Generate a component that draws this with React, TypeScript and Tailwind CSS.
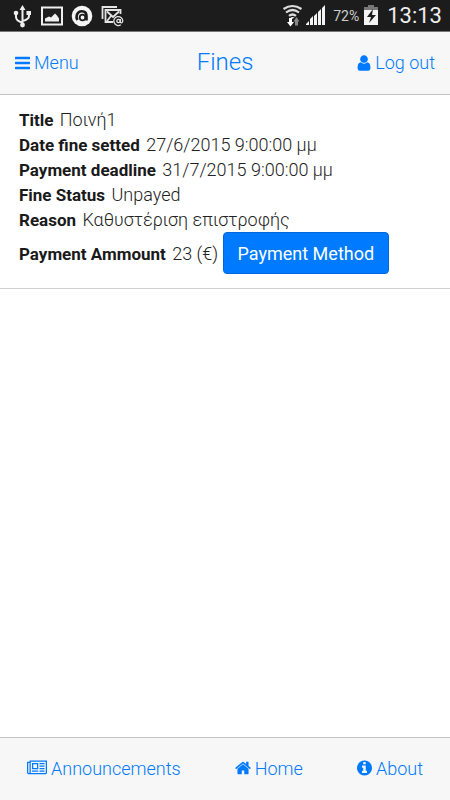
import type { ReactNode } from 'react';

const fines = [
  {
    id: 1,
    title: 'Ποινή1',
    date: '27/6/2015 9:00:00 μμ',
    deadline: '31/7/2015 9:00:00 μμ',
    status: 'Unpayed',
    reason: 'Καθυστέριση επιστροφής',
    amount: '23 (€)',
  },
];

function BarsIcon() {
  return (
    <svg className="h-[18px] w-[15px]" viewBox="128 0 1536 1792" fill="currentColor" aria-hidden="true">
      <path d="M1664 1344v128q0 26-19 45t-45 19h-1408q-26 0-45-19t-19-45v-128q0-26 19-45t45-19h1408q26 0 45 19t19 45zm0-512v128q0 26-19 45t-45 19h-1408q-26 0-45-19t-19-45v-128q0-26 19-45t45-19h1408q26 0 45 19t19 45zm0-512v128q0 26-19 45t-45 19h-1408q-26 0-45-19t-19-45v-128q0-26 19-45t45-19h1408q26 0 45 19t19 45z" />
    </svg>
  );
}

function UserIcon() {
  return (
    <svg className="h-[18px] w-[14px]" viewBox="256 0 1280 1792" fill="currentColor" aria-hidden="true">
      <path d="M1536 1399q0 109-62.5 187t-150.5 78h-854q-88 0-150.5-78t-62.5-187q0-85 8.5-160.5t31.5-152 58.5-131 94-89 134.5-34.5q131 128 313 128t313-128q76 0 134.5 34.5t94 89 58.5 131 31.5 152 8.5 160.5zm-256-887q0 159-112.5 271.5t-271.5 112.5-271.5-112.5-112.5-271.5 112.5-271.5 271.5-112.5 271.5 112.5 112.5 271.5z" />
    </svg>
  );
}

function NewsIcon() {
  return (
    <svg className="h-[18px] w-[20px]" viewBox="0 0 2048 1792" fill="currentColor" aria-hidden="true">
      <path d="M1024 512h-384v384h384v-384zm128 640v128h-640v-128h640zm0-768v640h-640v-640h640zm640 768v128h-512v-128h512zm0-256v128h-512v-128h512zm0-256v128h-512v-128h512zm0-256v128h-512v-128h512zm-1536 960v-960h-128v960q0 26 19 45t45 19 45-19 19-45zm1664 0v-1088h-1536v1088q0 33-11 64h1483q26 0 45-19t19-45zm128-1216v1216q0 80-56 136t-136 56h-1664q-80 0-136-56t-56-136v-1088h256v-128h1792z" />
    </svg>
  );
}

function HomeIcon() {
  return (
    <svg className="h-[18px] w-[16px]" viewBox="64 0 1664 1792" fill="currentColor" aria-hidden="true">
      <path d="M1472 992v480q0 26-19 45t-45 19h-384v-384h-256v384h-384q-26 0-45-19t-19-45v-480q0-1 .5-3t.5-3l575-474 575 474q1 2 1 6zm223-69l-62 74q-8 9-21 11h-3q-13 0-21-7l-692-577-692 577q-12 8-24 7-13-2-21-11l-62-74q-8-10-7-23.5t11-21.5l719-599q32-26 76-26t76 26l244 204v-195q0-14 9-23t23-9h192q14 0 23 9t9 23v408l219 182q10 8 11 21.5t-7 23.5z" />
    </svg>
  );
}

function InfoIcon() {
  return (
    <svg className="h-[18px] w-[15px]" viewBox="128 0 1536 1792" fill="currentColor" aria-hidden="true">
      <path d="M1152 1376v-160q0-14-9-23t-23-9h-96v-512q0-14-9-23t-23-9h-320q-14 0-23 9t-9 23v160q0 14 9 23t23 9h96v320h-96q-14 0-23 9t-9 23v160q0 14 9 23t23 9h448q14 0 23-9t9-23zm-128-896v-160q0-14-9-23t-23-9h-192q-14 0-23 9t-9 23v160q0 14 9 23t23 9h192q14 0 23-9t9-23zm640 416q0 209-103 385.5t-279.5 279.5-385.5 103-385.5-103-279.5-279.5-103-385.5 103-385.5 279.5-279.5 385.5-103 385.5 103 279.5 279.5 103 385.5z" />
    </svg>
  );
}

function StatusBar() {
  return (
    <div className="flex h-8 items-center justify-between border-b border-[#777] bg-[#1c1c1c] pr-2 pl-3 font-normal text-white">
      <div className="flex items-center gap-[7px]">
        {/* usb */}
        <svg className="h-6 w-5" viewBox="0 0 20 24" fill="none" stroke="#eee" strokeWidth="2" aria-hidden="true">
          <path d="M10.500 5v16M10.500 18.500c-4-1-6.500-3-6.500-5.500V9M10.500 17c4-1 6.500-2 6.500-5V9" />
          <circle cx="10.500" cy="21" r="2.400" fill="#eee" stroke="none" />
          <circle cx="4" cy="9" r="2.300" fill="#eee" stroke="none" />
          <path d="M14.500 7h4.500v4h-4.500zM10.500 1l3 5h-6z" fill="#eee" stroke="none" />
        </svg>
        {/* picture */}
        <svg className="h-6 w-6" viewBox="0 0 24 24" aria-hidden="true">
          <path d="M3 3.500h20v17H3z" fill="none" stroke="#eee" strokeWidth="2" />
          <path d="M6 17.500v-3l4-2 2 1 4-4 2 2 2 3v3z" fill="#eee" />
        </svg>
        {/* avast */}
        <svg className="h-6 w-6" viewBox="0 0 24 24" fill="none" aria-hidden="true">
          <circle cx="12" cy="12" r="10.300" fill="#f4f4f4" />
          <path
            d="M7.500 16Q6 13.500 6.800 11Q8 7.200 12 7.200Q16.500 7.200 16.500 12v4.500"
            stroke="#1c1c1c"
            strokeWidth="2.600"
          />
          <circle cx="12.500" cy="13.500" r="2.800" stroke="#1c1c1c" strokeWidth="1.800" />
        </svg>
        {/* mail */}
        <svg className="h-6 w-6" viewBox="0 0 24 24" fill="none" stroke="#e4e4e4" strokeWidth="1.800" aria-hidden="true">
          <path d="M1.500 15V3H16" />
          <path d="M12 18H4.500V6h15v4" />
          <path d="M6 7.500l6 5.500 6-5.500M6 17l4-5" />
          <circle cx="17.500" cy="17" r="1.700" strokeWidth="1.300" />
          <path d="M19.300 15v2.500q0 1.500 1.200 1.300t1.300-2a4.500 4.500 0 1 0-2 4" strokeWidth="1.300" />
        </svg>
      </div>
      <div className="flex items-center">
        {/* wifi */}
        <svg className="h-6 w-6" viewBox="0 0 24 24" fill="none" stroke="#ddd" strokeWidth="2.200" aria-hidden="true">
          <path d="M2.500 5q9-6 18 0M5 8.500q6.500-5 13 0M8 11.800q3.500-2.600 7 0" />
          <path d="M11.500 15l-2-2h4z" fill="#ddd" stroke="none" />
          <path d="M8 14h3v4h2l-3.500 4.500L6 18h2z" fill="#fff" stroke="none" />
          <path d="M14 21.500h3v-4h1.500L15.500 13 12.500 17.500H14z" fill="#888" stroke="none" />
        </svg>
        {/* signal */}
        <svg className="h-6 w-6" viewBox="0 0 24 24" fill="#f4f4f4" aria-hidden="true">
          <path d="M1 21v-1l3-3v4zM5 21v-6l3-3v9zM9 21v-9l3-3v12zM13 21V8l3-3v16zM17 21V4l3-3v20z" />
        </svg>
        <span className="pl-1 text-sm text-[#ccc]">72%</span>
        {/* battery */}
        <svg className="h-6 w-6" viewBox="0 0 24 24" aria-hidden="true">
          <path d="M9 1h6v2h4v4H5V3h4z" fill="#777" />
          <path d="M5 6h14v15H5z" fill="#f4f4f4" />
          <path d="M14 5l-6 8h4l-2 6 7-8h-4z" fill="#1c1c1c" />
        </svg>
        <span className="pl-1 text-[22px] leading-6 text-[#eee]">13:13</span>
      </div>
    </div>
  );
}

function Field({ label, children }: { label: string; children: ReactNode }) {
  return (
    <div>
      <dt className="mr-0.5 inline text-[17px] leading-5 font-bold text-[#1a1a1a]">{label}</dt>{' '}
      <dd className="inline">{children}</dd>
    </div>
  );
}

export default function App() {
  return (
    <div className="flex min-h-screen flex-col bg-white font-['Roboto','Noto_Sans',sans-serif] text-lg leading-[25px] font-light text-[#222]">
      <StatusBar />

      <header className="grid h-[63px] grid-cols-3 items-center border-b border-[#c4c4c4] bg-[#f7f7f7] px-[15px] pb-px text-[#007aff]">
        <a href="#menu" className="flex items-center gap-1">
          <BarsIcon />
          Menu
        </a>
        <h1 className="pb-0.5 text-center text-2xl">Fines</h1>
        <a href="#logout" className="flex items-center justify-end gap-1">
          <UserIcon />
          Log out
        </a>
      </header>

      <main className="flex-1">
        {fines.map((fine) => (
          <section key={fine.id} className="border-b border-[#d0d0d0] px-[19px] pt-3 pb-3.5">
            <dl>
              <Field label="Title">{fine.title}</Field>
              <Field label="Date fine setted">{fine.date}</Field>
              <Field label="Payment deadline">{fine.deadline}</Field>
              <Field label="Fine Status">{fine.status}</Field>
              <Field label="Reason">{fine.reason}</Field>
              <Field label="Payment Ammount">
                {fine.amount}{' '}
                <button className="h-[42px] rounded border border-[#0068dc] bg-[#007aff] px-3.5 font-normal text-white">
                  Payment Method
                </button>
              </Field>
            </dl>
          </section>
        ))}
      </main>

      <footer className="flex h-[63px] items-center justify-between border-t border-[#c4c4c4] bg-[#f7f7f7] px-[27px] pb-0.5 text-[#007aff]">
        <a href="#announcements" className="flex items-center gap-1">
          <NewsIcon />
          Announcements
        </a>
        <a href="#home" className="flex items-center gap-1">
          <HomeIcon />
          Home
        </a>
        <a href="#about" className="flex items-center gap-1">
          <InfoIcon />
          About
        </a>
      </footer>
    </div>
  );
}
